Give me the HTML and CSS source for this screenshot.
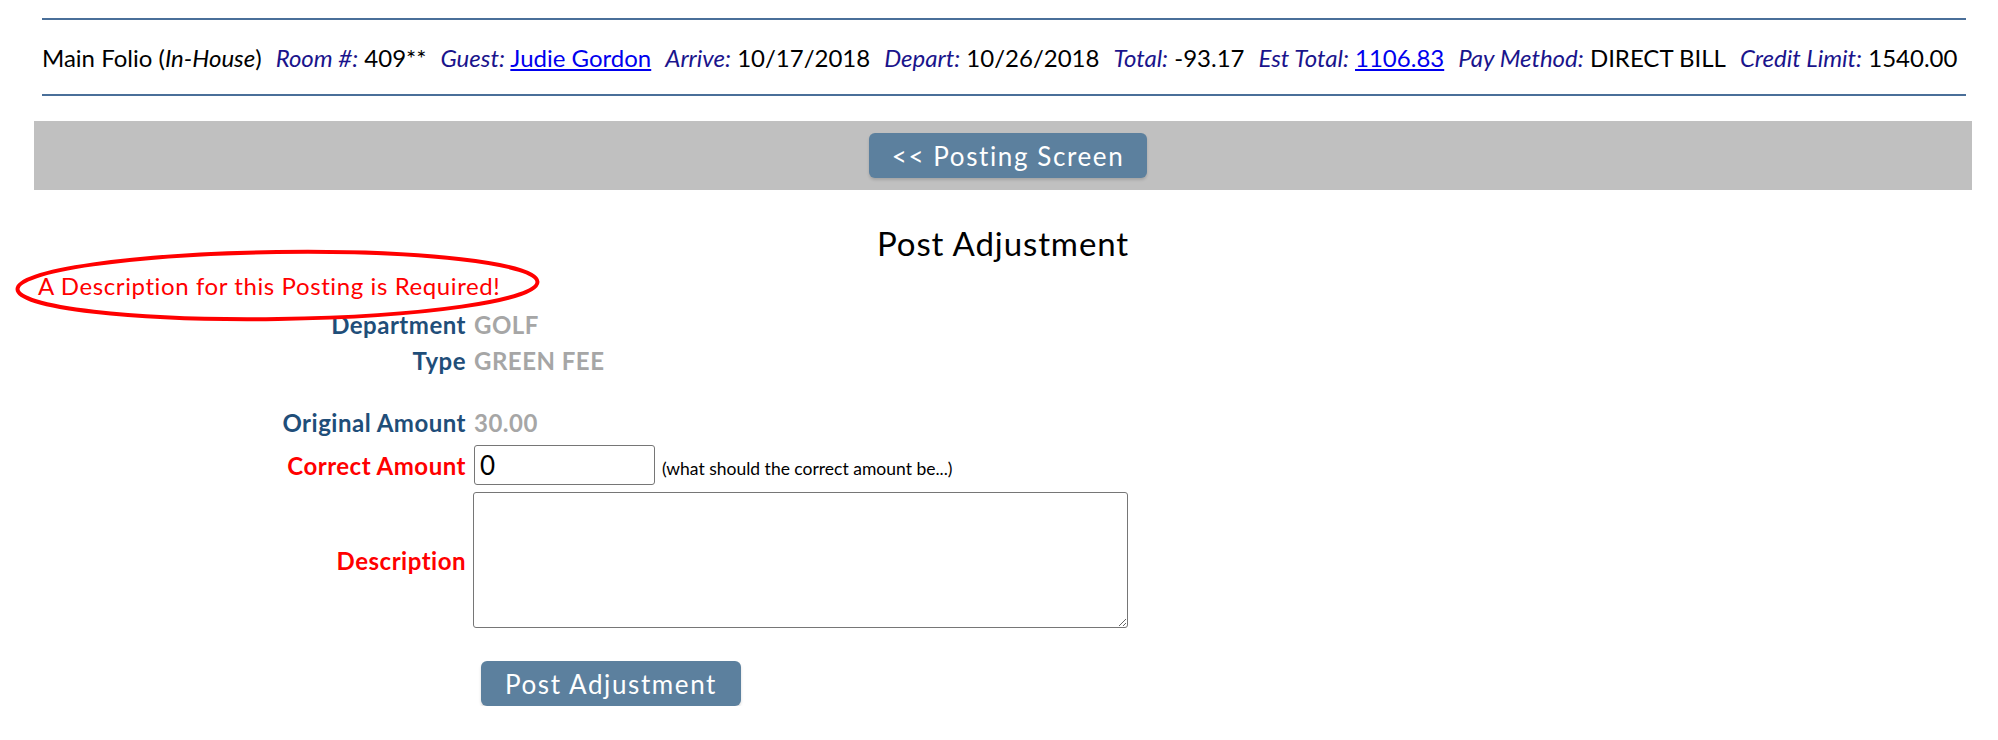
FILE: index.html
```html
<!DOCTYPE html>
<html>
<head>
<meta charset="utf-8">
<link rel="stylesheet" href="styles.css">
</head>
<body>
<div class="folio">
  <span>Main Folio (<i>In-House</i>)</span>
  <span><i class="lbl">Room #:</i> 409**</span>
  <span><i class="lbl">Guest:</i> <a href="#">Judie Gordon</a></span>
  <span><i class="lbl">Arrive:</i> 10/17/2018</span>
  <span><i class="lbl">Depart:</i> 10/26/2018</span>
  <span><i class="lbl">Total:</i> -93.17</span>
  <span><i class="lbl">Est Total:</i> <a href="#">1106.83</a></span>
  <span><i class="lbl">Pay Method:</i> DIRECT BILL</span>
  <span><i class="lbl">Credit Limit:</i> 1540.00</span>
</div>

<div class="navbar">
  <button class="btn btn-back">&lt;&lt; Posting Screen</button>
</div>

<div class="main">
  <h1 class="title">Post Adjustment</h1>
  <div class="error">
    A Description for this Posting is Required!
    <svg class="circle" width="527" height="73" viewBox="0 0 527 73">
      <ellipse cx="263.5" cy="36.5" rx="260" ry="33.5" fill="none" stroke="#ff0000" stroke-width="4" transform="rotate(-0.8 263.5 36.5)"/>
    </svg>
  </div>

  <div class="form">
    <div class="lab">Department</div><div class="val">GOLF</div>
    <div class="lab">Type</div><div class="val">GREEN FEE</div>
    <div class="spacer"></div>
    <div class="lab">Original Amount</div><div class="val">30.00</div>
    <div class="lab req">Correct Amount</div>
    <div class="val field-row"><input class="amount" type="text" value="0"><span class="hint">(what should the correct amount be...)</span></div>
    <div class="lab req">Description</div>
    <div class="val desc-cell"><textarea class="desc"></textarea></div>
    <div class="lab"></div>
    <div class="val submit-cell"><button class="btn btn-post">Post Adjustment</button></div>
  </div>
</div>
</body>
</html>
```

FILE: styles.css
```css
body {
  margin: 0;
  font-family: Lato, "Open Sans", sans-serif;
  color: #000;
  background: #fff;
}

.folio {
  margin: 18px 32px 0 42px;
  border-top: 2px solid #4a6f99;
  border-bottom: 2px solid #4a6f99;
  height: 74px;
  display: flex;
  align-items: center;
  gap: 14px;
  font-size: 24px;
  white-space: nowrap;
}

.folio .lbl {
  color: #1a148c;
}

.folio a {
  color: #0000ee;
  text-decoration: underline;
}

.navbar {
  margin: 25px 26px 0 34px;
  height: 69px;
  background: #c0c0c0;
  display: flex;
  justify-content: center;
  align-items: center;
}

.btn {
  font-family: Lato, sans-serif;
  background: #5c809e;
  color: #fff;
  border: none;
  border-radius: 6px;
  font-size: 26px;
  letter-spacing: 1.6px;
  box-shadow: 0 2px 3px rgba(0, 0, 0, 0.15);
  padding: 0;
}

.btn-back {
  width: 278px;
  height: 45px;
  margin-left: 10px;
}

.main {
  margin: 0 26px 0 34px;
}

.title {
  margin: 33px 0 0;
  text-align: center;
  font-weight: normal;
  font-size: 33px;
  letter-spacing: 0.9px;
  line-height: 40px;
}

.error {
  position: relative;
  margin-top: 8px;
  padding-left: 4px;
  color: #ff0000;
  font-size: 24px;
  letter-spacing: 0.6px;
  line-height: 29px;
}

.circle {
  position: absolute;
  left: -20px;
  top: -22px;
}

.form {
  display: grid;
  grid-template-columns: 432px auto;
  column-gap: 8px;
  margin-top: 6px;
  font-size: 24px;
  letter-spacing: 0.5px;
  font-weight: bold;
}

.lab, .val {
  display: flex;
  align-items: center;
  min-height: 36px;
}

.lab {
  justify-content: flex-end;
  color: #1f4e79;
}

.lab.req {
  color: #ff0000;
}

.val {
  color: #a6a6a6;
}

.spacer {
  grid-column: 1 / 3;
  height: 26px;
}

.field-row {
  height: 50px;
  align-items: baseline;
  padding-top: 5px;
  box-sizing: border-box;
}

.amount {
  width: 181px;
  height: 40px;
  box-sizing: border-box;
  border: 1px solid #767676;
  border-radius: 3px;
  font-family: Lato, sans-serif;
  font-size: 26px;
  padding: 0 5px;
  color: #000;
}

.hint {
  margin-left: 7px;
  font-size: 17.5px;
  letter-spacing: 0;
  font-weight: normal;
  color: #000;
}

.desc-cell {
  height: 140px;
}

.desc {
  width: 655px;
  height: 136px;
  box-sizing: border-box;
  border: 1px solid #767676;
  border-radius: 3px;
  margin: 0 0 0 -1px;
  resize: both;
}

.submit-cell {
  padding-top: 31px;
}

.btn-post {
  width: 260px;
  height: 45px;
  margin-left: 7px;
}
```
